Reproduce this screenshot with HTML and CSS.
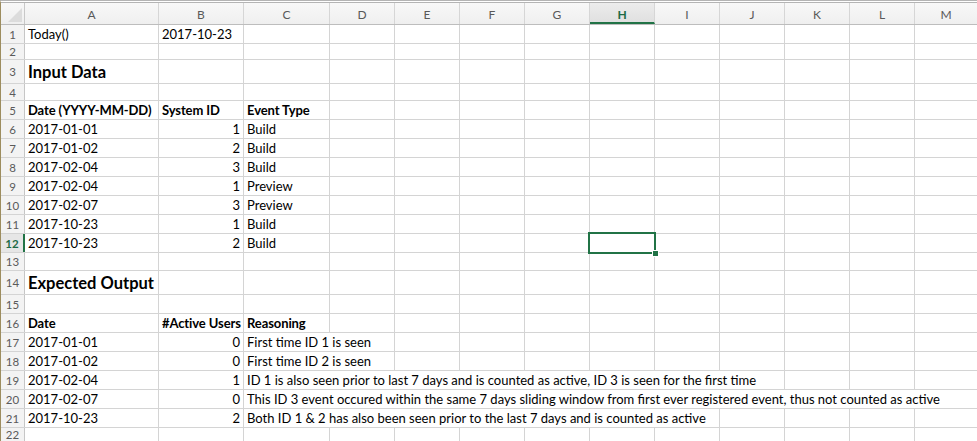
FILE: index.html
```html
<!DOCTYPE html>
<html>
<head>
<meta charset="utf-8">
<link rel="stylesheet" href="styles.css">
</head>
<body>
<div class="sheet">
  <div class="colheads">
    <div class="ch corner"><svg width="14" height="14" viewBox="0 0 14 14"><polygon points="14,0 14,14 0,14" fill="#dcdcdc"/></svg></div>
    <div class="ch">A</div><div class="ch">B</div><div class="ch">C</div><div class="ch">D</div>
    <div class="ch">E</div><div class="ch">F</div><div class="ch">G</div><div class="ch sel">H</div>
    <div class="ch">I</div><div class="ch">J</div><div class="ch">K</div><div class="ch">L</div><div class="ch last">M</div>
  </div>

  <div class="row h19"><div class="rh">1</div><div class="c">Today()</div><div class="c">2017-10-23</div><div class="c"></div><div class="rest"></div></div>
  <div class="row h16"><div class="rh">2</div><div class="c"></div><div class="c"></div><div class="c"></div><div class="rest"></div></div>
  <div class="row h24"><div class="rh">3</div><div class="c title">Input Data</div><div class="c"></div><div class="c"></div><div class="rest"></div></div>
  <div class="row h17"><div class="rh">4</div><div class="c"></div><div class="c"></div><div class="c"></div><div class="rest"></div></div>
  <div class="row h19"><div class="rh">5</div><div class="c b">Date (YYYY-MM-DD)</div><div class="c b">System ID</div><div class="c b">Event Type</div><div class="rest"></div></div>
  <div class="row h19"><div class="rh">6</div><div class="c">2017-01-01</div><div class="c num">1</div><div class="c">Build</div><div class="rest"></div></div>
  <div class="row h19"><div class="rh">7</div><div class="c">2017-01-02</div><div class="c num">2</div><div class="c">Build</div><div class="rest"></div></div>
  <div class="row h19"><div class="rh">8</div><div class="c">2017-02-04</div><div class="c num">3</div><div class="c">Build</div><div class="rest"></div></div>
  <div class="row h19"><div class="rh">9</div><div class="c">2017-02-04</div><div class="c num">1</div><div class="c">Preview</div><div class="rest"></div></div>
  <div class="row h19"><div class="rh">10</div><div class="c">2017-02-07</div><div class="c num">3</div><div class="c">Preview</div><div class="rest"></div></div>
  <div class="row h19"><div class="rh">11</div><div class="c">2017-10-23</div><div class="c num">1</div><div class="c">Build</div><div class="rest"></div></div>
  <div class="row h19"><div class="rh active">12</div><div class="c">2017-10-23</div><div class="c num">2</div><div class="c">Build</div><div class="rest"><div class="selection"><span class="handle"></span></div></div></div>
  <div class="row h18"><div class="rh">13</div><div class="c"></div><div class="c"></div><div class="c"></div><div class="rest"></div></div>
  <div class="row h24"><div class="rh">14</div><div class="c title">Expected Output</div><div class="c"></div><div class="c"></div><div class="rest"></div></div>
  <div class="row h19"><div class="rh">15</div><div class="c"></div><div class="c"></div><div class="c"></div><div class="rest"></div></div>
  <div class="row h19"><div class="rh">16</div><div class="c b">Date</div><div class="c b">#Active Users</div><div class="c b">Reasoning</div><div class="rest"></div></div>
  <div class="row h19"><div class="rh">17</div><div class="c">2017-01-01</div><div class="c num">0</div><div class="c over"><span class="ov">First time ID 1 is seen</span></div><div class="rest"></div></div>
  <div class="row h19"><div class="rh">18</div><div class="c">2017-01-02</div><div class="c num">0</div><div class="c over"><span class="ov">First time ID 2 is seen</span></div><div class="rest"></div></div>
  <div class="row h19"><div class="rh">19</div><div class="c">2017-02-04</div><div class="c num">1</div><div class="c over"><span class="ov">ID 1 is also seen prior to last 7 days and is counted as active, ID 3 is seen for the first time</span></div><div class="rest"></div></div>
  <div class="row h19"><div class="rh">20</div><div class="c">2017-02-07</div><div class="c num">0</div><div class="c over"><span class="ov">This ID 3 event occured within the same 7 days sliding window from first ever registered event, thus not counted as active</span></div><div class="rest"></div></div>
  <div class="row h19"><div class="rh">21</div><div class="c">2017-10-23</div><div class="c num">2</div><div class="c over"><span class="ov">Both ID 1 &amp; 2 has also been seen prior to the last 7 days and is counted as active</span></div><div class="rest"></div></div>
  <div class="row h13"><div class="rh">22</div><div class="c"></div><div class="c"></div><div class="c"></div><div class="rest"></div></div>
</div>
</body>
</html>
```

FILE: styles.css
```css
* { box-sizing: border-box; }
html, body { margin: 0; padding: 0; background: #fff; overflow: hidden; }
body {
  width: 977px;
  height: 441px;
  border-left: 1px solid #9d8d5f;
  border-top: 3px double #b4b4b4;
  font-family: "Lato", "Liberation Sans", sans-serif;
  color: #000;
}
.sheet { display: flex; flex-direction: column; }

.colheads {
  display: grid;
  grid-template-columns: 24px 134px 85px 86px repeat(9, 65px) 1fr;
  height: 22px;
  background: linear-gradient(#f8f8f8, #efefef);
  border-bottom: 1px solid #bdbdbd;
}
.ch {
  border-right: 1px solid #d6d6d6;
  display: flex;
  align-items: center;
  justify-content: center;
  font-size: 12px;
  color: #595959;
  padding-top: 1px;
}
.ch.last { border-right: none; }
.ch.corner { align-items: flex-end; justify-content: flex-end; padding: 0 2px 2px 0; border-right-color: #c8c8c8; }
.ch.corner svg { display: block; }
.ch.sel {
  background: linear-gradient(#ececec, #e0e0e0);
  color: #1e6b45;
  font-weight: bold;
  border-bottom: 2px solid #217346;
  padding-top: 3px;
}

.row {
  display: grid;
  grid-template-columns: 24px 134px 85px 86px 1fr;
  border-bottom: 1px solid #d4d4d4;
}
.h13 { height: 13px; border-bottom: none; }
.h16 { height: 16px; }
.h17 { height: 17px; }
.h18 { height: 18px; }
.h19 { height: 19px; }
.h24 { height: 24px; }

.rh {
  background: #f3f3f3;
  border-right: 1px solid #c6c6c6;
  color: #5a5a5a;
  font-size: 11.5px;
  display: flex;
  align-items: center;
  justify-content: center;
  padding-top: 0;
}
.rh.active {
  color: #1e6b45;
  font-weight: bold;
  background: #e6e6e6;
  border-right: 2px solid #217346;
}

.c {
  border-right: 1px solid #d4d4d4;
  display: flex;
  align-items: flex-end;
  padding: 0 3px 0 3px;
  font-size: 13px;
  line-height: 17px;
  white-space: nowrap;
  overflow: hidden;
}
.c.b { font-weight: bold; letter-spacing: -0.1px; }
.c.num { justify-content: flex-end; }
.c.title { font-size: 16.5px; font-weight: bold; line-height: 22px; }
.c.over { overflow: visible; position: relative; z-index: 1; padding: 0; }
.ov { background: #fff; padding: 0 6px 0 3px; display: block; height: 18px; line-height: 18px; }

.rest {
  position: relative;
  background-image: repeating-linear-gradient(to right, transparent 0 64px, #d4d4d4 64px 65px);
}
.selection {
  position: absolute;
  left: 258px;
  top: -2px;
  width: 68px;
  height: 22px;
  border: 2px solid #217346;
  z-index: 2;
}
.handle {
  position: absolute;
  right: -5px;
  bottom: -5px;
  width: 7px;
  height: 7px;
  background: #217346;
  border: 1px solid #fff;
}
```
